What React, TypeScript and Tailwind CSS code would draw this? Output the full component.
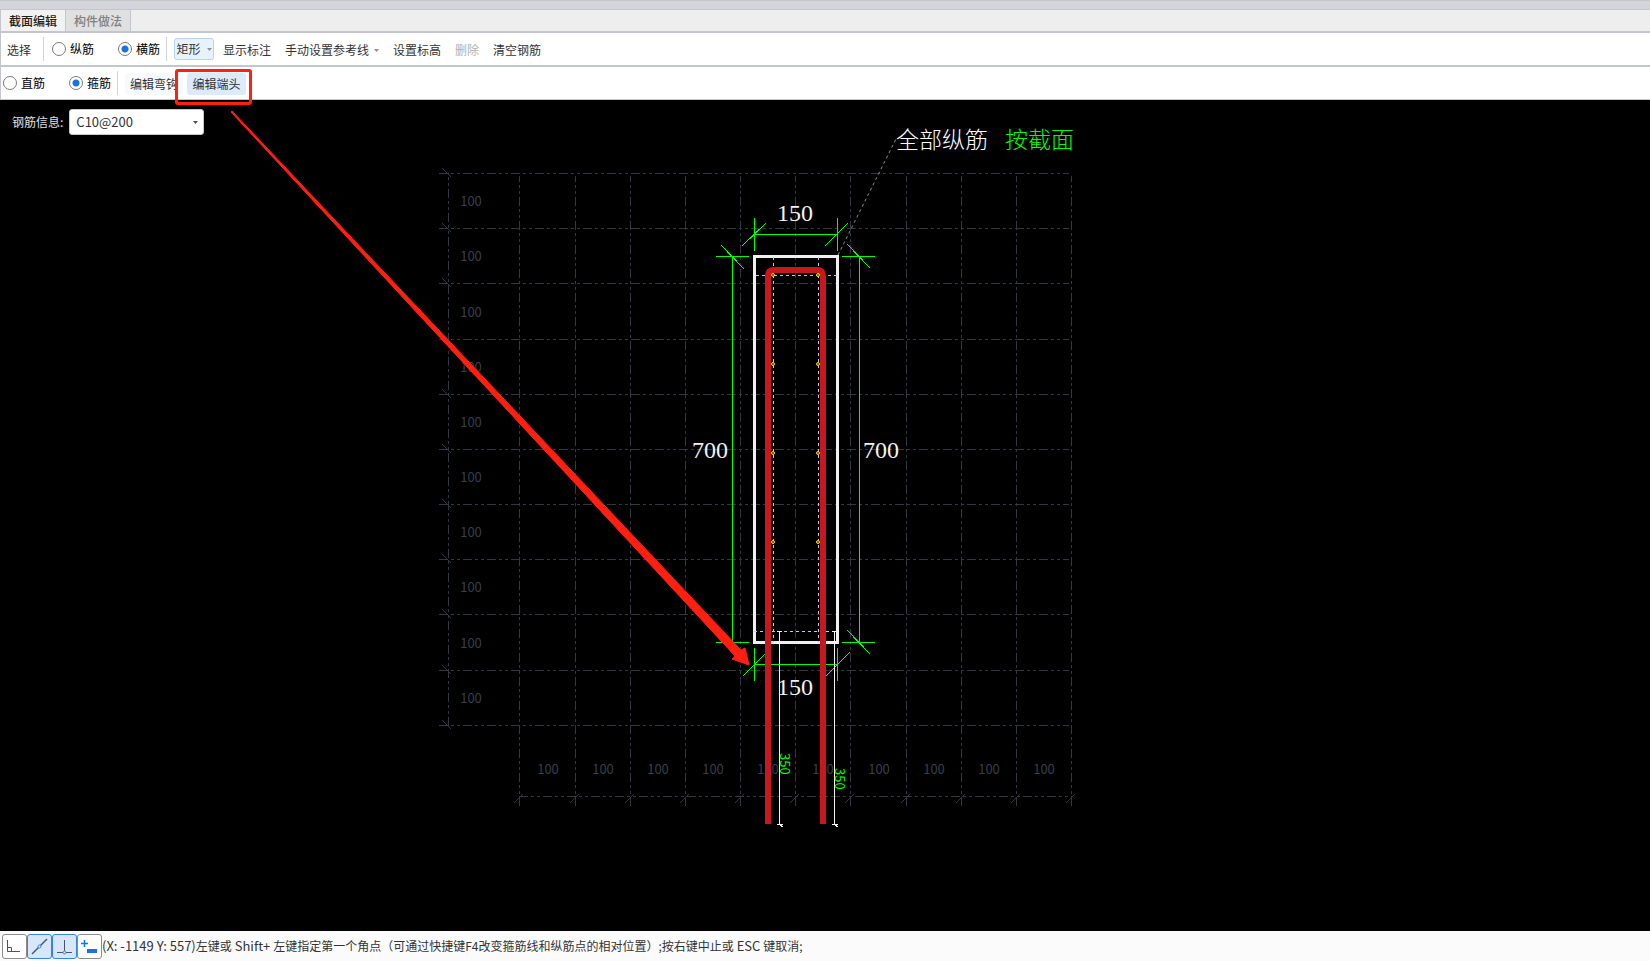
import { ReactNode } from 'react'

const columns = [519, 575, 630, 685, 740, 795, 850, 906, 961, 1016, 1071]
const rows = [173, 228, 283, 339, 394, 449, 504, 559, 614, 670, 725]
const rebars = [275, 364, 453, 542]

type RadioProps = { name: string; label: string; checked?: boolean }

function Radio({ name, label, checked }: RadioProps) {
    return (
        <label className="flex items-center gap-1 text-black">
            <input
                type="radio"
                name={name}
                defaultChecked={checked}
                className="w-[14px] h-[14px] appearance-none rounded-full border border-[#7a7a7a] bg-white checked:bg-[radial-gradient(circle,#1a73e0_3px,#ffffff_4px)]"
            />
            {label}
        </label>
    )
}

function Caret({ className }: { className: string }) {
    return (
        <svg className={className} width="5" height="3" viewBox="0 0 5 3" fill="currentColor">
            <path d="M0 0h5L2.5 3z" />
        </svg>
    )
}

function Divider() {
    return <span className="w-px h-6 bg-[#d4d4d4]" />
}

function StatusButton({ label, active, children }: { label: string; active?: boolean; children: ReactNode }) {
    return (
        <button
            aria-label={label}
            className={`w-[25px] h-[25px] rounded-[3px] border flex items-center justify-center ${active ? 'bg-[#d8e6fa] border-[#3584e4]' : 'bg-white border-[#8c8c8c]'}`}
        >
            <svg width="23" height="23" viewBox="0 0 23 23" fill="none" stroke="#4a5468">
                {children}
            </svg>
        </button>
    )
}

function Grid() {
    return (
        <g stroke="#303844" strokeDasharray="9 3 3 3 3 3" shapeRendering="crispEdges">
            {rows.map((y) => (
                <path key={y} d={`M439 ${y + 0.5}H1069`} />
            ))}
            {columns.map((x) => (
                <path key={x} d={`M${x + 0.5} 806V176`} />
            ))}
            <path d="M448.5 726V173M519 796.5H1072" />
            <g strokeDasharray="none">
                {rows.map((y) => (
                    <path key={y} d={`M442 ${y - 5}l9 9`} />
                ))}
                {columns.map((x) => (
                    <path key={x} d={`M${x + 4} 794l-9 9`} />
                ))}
            </g>
        </g>
    )
}

function GridLabels() {
    return (
        <g fill="#363f4c" className="text-[13px] font-normal" textAnchor="middle">
            {rows.slice(1).map((y) => (
                <text key={y} x="471" y={y - 22}>100</text>
            ))}
            {columns.slice(1).map((x) => (
                <text key={x} x={x - 27} y="774">100</text>
            ))}
        </g>
    )
}

function Dimensions() {
    return (
        <>
            <g stroke="#00ff00" shapeRendering="crispEdges">
                <path d="M754 234.5H838M754.5 218V251M837.5 218V251M742 246l24 -23M825 246l23 -23" />
                <path d="M754 664.5H838M754.5 648V681M837.5 648V681M743 676l24 -24M826 676l24 -24" />
                <path d="M732.5 256V642M716 256.5H749M716 642.5H749M721 245l23 24M721 631l23 24" />
                <path d="M859.5 256V642M842 256.5H875M842 642.5H875M847 244l23 24M847 630l23 24" />
            </g>
            <g fill="#f2f2f2" className="font-['Liberation_Serif',serif] text-[24px]">
                <text x="777" y="221">150</text>
                <text x="692" y="458">700</text>
                <text x="863" y="458">700</text>
            </g>
        </>
    )
}

function Section() {
    return (
        <>
            <rect x="754.5" y="256.5" width="83" height="386" fill="none" stroke="#f0f0f0" strokeWidth="3" />
            <path
                d="M773.5 257V642M818.5 257V642M756 275.5H838M754 631.5H838"
                stroke="#a8d0f8"
                strokeDasharray="3 3"
                shapeRendering="crispEdges"
            />
            <path d="M768 824V276Q768 270 774 270H817Q823 270 823 276V824" fill="none" stroke="#c8171e" strokeWidth="6" />
            <g fill="#4a4000" stroke="#f0e020">
                {rebars.map((y) => (
                    <g key={y}>
                        <circle cx="773" cy={y} r="1.5" />
                        <circle cx="818" cy={y} r="1.5" />
                    </g>
                ))}
            </g>
            <g stroke="#f4f4f4" shapeRendering="crispEdges">
                <path d="M779.5 631V825M777 631.5H782M777 824.5H783M780 825l3 2" />
                <path d="M834.5 631V825M832 631.5H837M832 824.5H838M835 825l3 2" />
            </g>
            <text x="777" y="695" fill="#f2f2f2" className="font-['Liberation_Serif',serif] text-[24px]">150</text>
            <g fill="#00ff00" className="text-[13px] font-normal">
                <text transform="translate(780 753) rotate(90)">350</text>
                <text transform="translate(835 768) rotate(90)">350</text>
            </g>
        </>
    )
}

function Drawing() {
    return (
        <svg
            className="absolute inset-0 w-full h-full font-light font-['Noto_Sans_CJK_SC',sans-serif]"
            viewBox="0 100 1650 831"
        >
            <Grid />
            <GridLabels />
            <Dimensions />
            <Section />
            <path d="M838 255L896 139" stroke="#8c8c8c" strokeDasharray="3 3" />
            <g className="text-[23px]">
                <text x="896" y="148" fill="#ffffff">全部纵筋</text>
                <text x="1005" y="148" fill="#00ff00">按截面</text>
            </g>
            <path d="M231 112L735 656L732 659L749 665L745 648L741 650L232 111Z" fill="#ff2012" stroke="#ff2012" />
        </svg>
    )
}

function App() {
    return (
        <div className="flex flex-col h-screen bg-white text-[12px] text-[#333333] font-['Noto_Sans_CJK_SC',sans-serif]">
            <div className="h-[10px] shrink-0 bg-[#d3d5da] border-y border-[#c3c6cc]" />
            <nav className="h-[23px] shrink-0 flex bg-[#eeeeee] border-b-2 border-l border-[#c3c6cc]">
                <button className="w-[65px] font-medium text-[#202020] bg-[#f2f2f2] border-r border-[#c3c6cc]">截面编辑</button>
                <button className="w-[65px] font-medium text-[#808080] bg-[#e0e0e0] border-r border-[#c3c6cc]">构件做法</button>
            </nav>
            <div className="h-[34px] shrink-0 flex items-center pl-[6px] border-b-2 border-l border-[#c3c6cc]">
                <button className="mr-3 pt-[2px]">选择</button>
                <Divider />
                <div className="flex gap-6 pl-2 pr-[6px]">
                    <Radio name="bar" label="纵筋" />
                    <Radio name="bar" label="横筋" checked />
                </div>
                <Divider />
                <button className="ml-[7px] mr-[9px] w-10 h-[22px] flex items-center justify-center gap-[6px] rounded-[3px] border border-[#b8d4f0] bg-[#e8f2fd]">
                    矩形
                    <Caret className="text-[#909090]" />
                </button>
                <div className="flex items-center gap-[14px] pt-[2px]">
                    <button>显示标注</button>
                    <button className="flex items-center gap-[5px]">
                        手动设置参考线
                        <Caret className="text-[#909090]" />
                    </button>
                    <button>设置标高</button>
                    <button className="text-[#b0b0b0]" disabled>删除</button>
                    <button>清空钢筋</button>
                </div>
            </div>
            <div className="h-[33px] shrink-0 flex items-center pl-[2px] border-b border-l border-[#c3c6cc]">
                <div className="flex gap-6 pr-[6px]">
                    <Radio name="shape" label="直筋" />
                    <Radio name="shape" label="箍筋" checked />
                </div>
                <Divider />
                <div className="flex gap-1 pl-[7px] pt-[2px]">
                    <button className="w-[58px] h-[22px] rounded-[3px] bg-[#f6f9fe]">编辑弯钩</button>
                    <div className="relative">
                        <button className="w-[59px] h-[22px] rounded-[3px] bg-[#dceafc]">编辑端头</button>
                        <span className="absolute z-10 -left-3 -top-1 w-[77px] h-9 rounded-[3px] border-3 border-[#ff2012]" />
                    </div>
                </div>
            </div>
            <main className="relative flex-1 min-h-0 bg-black">
                <Drawing />
                <div className="relative flex items-center gap-[6px] pl-3 pt-[9px]">
                    <label htmlFor="info" className="text-[#e0e0e0]">钢筋信息:</label>
                    <div className="relative flex items-center">
                        <select id="info" className="appearance-none w-[135px] h-[26px] pl-[6px] rounded-[3px] border border-[#c8c8c8] bg-white text-[13px] text-[#333333]">
                            <option>C10@200</option>
                        </select>
                        <Caret className="absolute right-[6px] text-[#505050]" />
                    </div>
                </div>
            </main>
            <footer className="h-[30px] shrink-0 flex items-center pl-[2px] bg-[#fbfbfb]">
                <StatusButton label="正交">
                    <path d="M4.5 5V16.5H17M4.5 12.5H8.5V16.5" />
                </StatusButton>
                <StatusButton label="对象捕捉" active>
                    <path d="M4 19L19 4" strokeWidth="1.5" />
                    <circle cx="11.5" cy="11.5" r="1.5" fill="#d8e6fa" stroke="#3584e4" />
                </StatusButton>
                <StatusButton label="垂足" active>
                    <path d="M11.5 5V17M4 17.5H19" />
                    <circle cx="11.5" cy="17.5" r="1.5" fill="#d8e6fa" stroke="#3584e4" />
                </StatusButton>
                <StatusButton label="动态输入">
                    <path d="M3 8.5H10M6.5 5V12" stroke="#1a73e0" strokeWidth="1.5" />
                    <path d="M9 14H19V18H9z" fill="#1a73e0" stroke="none" />
                </StatusButton>
                <p className="whitespace-pre">
                    <span className="text-[13px]">(X: -1149 Y: 557)</span>左键或<span className="text-[13px]"> Shift+ </span>
                    左键指定第一个角点（可通过快捷键F4改变箍筋线和纵筋点的相对位置）;按右键中止或<span className="text-[13px]"> ESC </span>键取消;
                </p>
            </footer>
        </div>
    )
}

export default App
